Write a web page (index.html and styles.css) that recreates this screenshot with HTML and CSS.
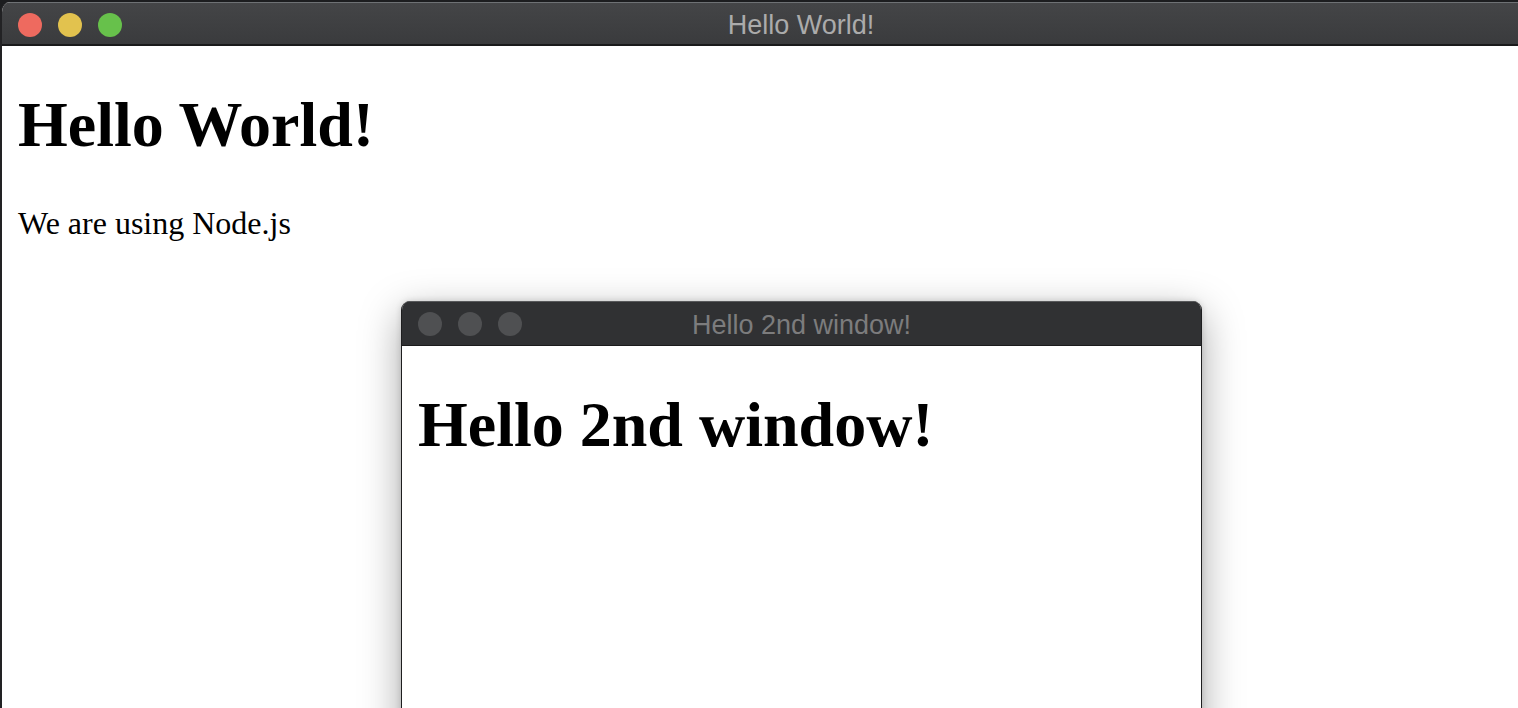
FILE: index.html
```html
<!DOCTYPE html>
<html>
<head>
<meta charset="utf-8">
<title>Hello World!</title>
<link rel="stylesheet" href="styles.css">
</head>
<body>
<div class="desktop">
  <div class="window main-window">
    <div class="titlebar main-titlebar">
      <div class="lights">
        <span class="light red"></span>
        <span class="light yellow"></span>
        <span class="light green"></span>
      </div>
      <div class="title main-title">Hello World!</div>
    </div>
    <div class="content main-content">
      <h1 class="heading">Hello World!</h1>
      <p class="text">We are using Node.js</p>
    </div>
  </div>

  <div class="window second-window">
    <div class="titlebar second-titlebar">
      <div class="lights">
        <span class="light grey"></span>
        <span class="light grey"></span>
        <span class="light grey"></span>
      </div>
      <div class="title second-title">Hello 2nd window!</div>
    </div>
    <div class="content second-content">
      <h1 class="heading">Hello 2nd window!</h1>
    </div>
  </div>
</div>
</body>
</html>
```

FILE: styles.css
```css
html, body {
  margin: 0;
  padding: 0;
  overflow: hidden;
  background: #1c1d1f;
}

.desktop {
  position: relative;
  width: 1518px;
  height: 708px;
  overflow: hidden;
}

.window {
  display: flex;
  flex-direction: column;
  box-sizing: border-box;
}

.main-window {
  margin-top: 2px;
  width: 1602px;
  height: 706px;
  border-radius: 10px 10px 0 0;
  border-left: 2px solid #222224;
  background: #ffffff;
  overflow: hidden;
}

.titlebar {
  position: relative;
  display: flex;
  align-items: center;
  box-sizing: border-box;
  flex-shrink: 0;
}

.main-titlebar {
  height: 44px;
  margin-left: -2px;
  padding-left: 2px;
  border-top: 1px solid #6e7174;
  border-bottom: 2px solid #1a1a1b;
  background: linear-gradient(#444547, #3a3b3d);
}

.lights {
  display: flex;
  gap: 16px;
  padding-left: 16px;
}

.main-titlebar .lights {
  padding-left: 16px;
  margin-top: 2px;
}

.light {
  width: 24px;
  height: 24px;
  border-radius: 50%;
  display: block;
}

.red { background: #ee6a5f; }
.yellow { background: #e2c24e; }
.green { background: #67c14b; }
.grey { background: #4f5052; }

.title {
  position: absolute;
  left: 0;
  right: 0;
  text-align: center;
  font-family: "Liberation Sans", Arial, sans-serif;
  font-size: 27px;
  line-height: 30px;
}

.main-title {
  color: #ababab;
  top: 7px;
}

.content {
  flex: 1;
  background: #ffffff;
  font-family: "Liberation Serif", "Times New Roman", serif;
  color: #000;
}

.main-content {
  padding: 0 16px;
}

.heading {
  font-size: 64px;
  font-weight: bold;
  line-height: 74px;
  margin: 42px 0 0 0;
}

.text {
  font-size: 32px;
  line-height: 37px;
  margin: 43px 0 0 0;
}

.second-window {
  position: absolute;
  left: 401px;
  top: 301px;
  width: 801px;
  height: 460px;
  border-radius: 9px 9px 0 0;
  background: #ffffff;
  border-left: 1px solid #1e1e1f;
  border-right: 1px solid #1e1e1f;
  box-shadow: 0 12px 40px rgba(0, 0, 0, 0.35), 0 0 6px rgba(0, 0, 0, 0.15);
  overflow: hidden;
}

.second-titlebar {
  height: 45px;
  margin: 0 -1px;
  padding-left: 1px;
  border-top: 1px solid #58595b;
  border-bottom: 1px solid #1b1b1c;
  background: #303133;
}

.second-titlebar .lights {
  padding-left: 16px;
}

.second-title {
  color: #7c7c7d;
  top: 8px;
}

.second-content {
  padding: 0 16px;
}
```
